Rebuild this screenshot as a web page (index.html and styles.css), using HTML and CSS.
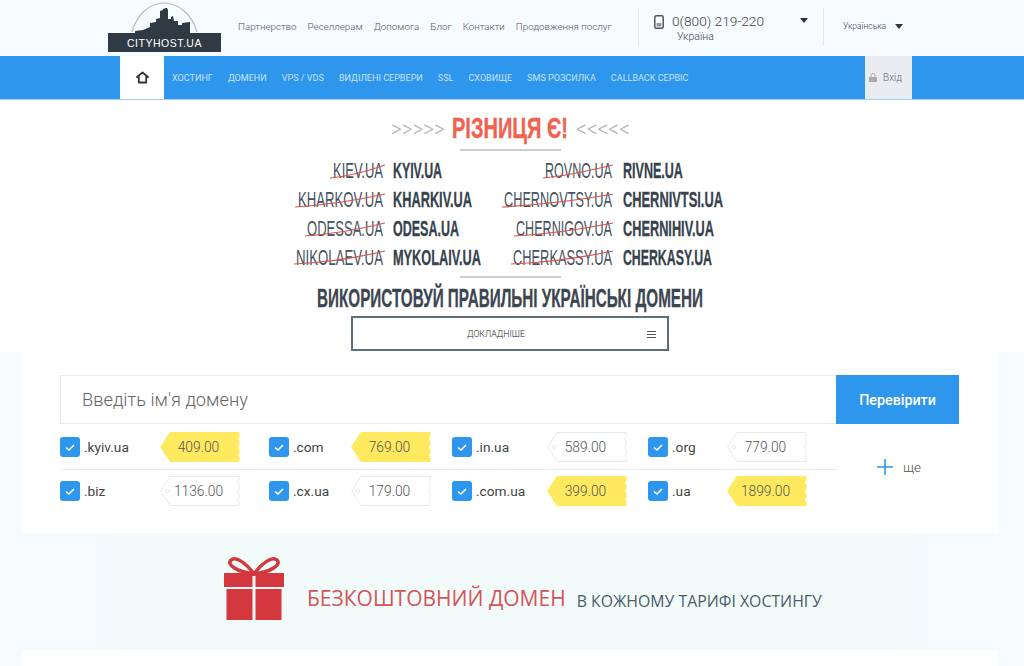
FILE: index.html
```html
<!DOCTYPE html>
<html lang="uk">

<head>
    <meta charset="UTF-8">
    <title>CITYHOST.UA</title>
    <link rel="stylesheet" href="styles.css">
</head>

<body>
    <svg class="defs" width="0" height="0">
        <symbol id="tag" viewBox="0 0 80 30">
            <path d="M10 .5H79v4l-1.500 2 1.500 2.500v4l-1.500 2 1.500 2.500v4l-1.500 2 1.500 2v4H10L.7 15z" />
            <circle cx="7" cy="15" r="1.600" class="hole" />
        </symbol>
        <symbol id="check" viewBox="0 0 20 20">
            <rect width="20" height="20" rx="3" fill="#2e96ec" />
            <path d="M6 10.500l3 2.500 5-5" fill="none" stroke="#fff" stroke-width="1.600" />
        </symbol>
    </svg>

    <header class="top">
        <a class="logo" href="#">
            <svg width="113" height="33" viewBox="0 0 113 33">
                <path d="M24 32C29 14 42 3 56 3s28 11 33 29" fill="none" stroke="#bbb" stroke-width="1.200" />
                <path d="M27 33v-2l8-1 7-3v-4l6-1v-3l4-1v-7l3-1V9l3-1h1l1 2v9h3v-2l2-1 1 5h4v4h4v-2l8-1v11z" fill="#2f3a44" />
            </svg>
            <span class="logo-name">CITYHOST.UA</span>
        </a>
        <nav class="top-links">
            <a href="#">Партнерство</a>
            <a href="#">Реселлерам</a>
            <a href="#">Допомога</a>
            <a href="#">Блог</a>
            <a href="#">Контакти</a>
            <a href="#">Продовження послуг</a>
        </nav>
        <div class="phone">
            <svg class="phone-icon" width="10" height="14" viewBox="0 0 10 14">
                <rect x=".8" y=".8" width="8.400" height="12.400" rx="1.500" fill="none" stroke="#555" stroke-width="1.500" />
                <rect x="2.500" y="8" width="5" height="3.500" fill="#999" />
            </svg>
            <div class="phone-text">
                <div class="phone-num">0(800) 219-220</div>
                <div class="phone-country">Україна</div>
            </div>
            <span class="arrow"></span>
        </div>
        <div class="lang">Українська <span class="arrow"></span></div>
    </header>

    <div class="menu">
        <a class="home" href="#">
            <svg width="13" height="13" viewBox="0 0 13 13">
                <path d="M6.500 1.500L1 6h1.800v5.500h7.400V6H12z" fill="none" stroke="#333" stroke-width="1.800" stroke-linejoin="round" />
            </svg>
        </a>
        <nav class="menu-links">
            <a href="#">Хостинг</a>
            <a href="#">Домени</a>
            <a href="#">VPS / VDS</a>
            <a href="#">Виділені сервери</a>
            <a href="#">SSL</a>
            <a href="#">Сховище</a>
            <a href="#">SMS розсилка</a>
            <a href="#">Callback сервіс</a>
        </nav>
        <a class="login" href="#">
            <svg width="8" height="9" viewBox="0 0 8 9">
                <path d="M2 4V2.500a2 2 0 0 1 4 0V4" fill="none" stroke="#aaa" />
                <rect y="4" width="8" height="5" fill="#aaa" />
            </svg>
            Вхід
        </a>
    </div>

    <section class="banner">
        <svg class="banner-art" width="1024" height="216" viewBox="0 100 1024 216">
            <g transform="scale(.87 1)">
                <text class="chev" x="449.400" y="137" textLength="62" lengthAdjust="spacingAndGlyphs">&gt;&gt;&gt;&gt;&gt;</text>
                <text class="chev" x="662.100" y="137" textLength="62" lengthAdjust="spacingAndGlyphs">&lt;&lt;&lt;&lt;&lt;</text>
            </g>
            <g transform="scale(.67 1)">
                <text class="diff" x="674.600" y="138" textLength="173" lengthAdjust="spacingAndGlyphs">РІЗНИЦЯ Є!</text>
            </g>
            <line class="rule" x1="460" y1="150" x2="561" y2="150" />

            <!-- шрифту вузького нема, тому стискаємо групою -->
            <g class="old" transform="scale(.6 1)">
                <text x="555" y="178" textLength="83.300" lengthAdjust="spacingAndGlyphs">KIEV.UA</text>
                <text x="496.700" y="207" textLength="141.700" lengthAdjust="spacingAndGlyphs">KHARKOV.UA</text>
                <text x="511.700" y="236" textLength="126.700" lengthAdjust="spacingAndGlyphs">ODESSA.UA</text>
                <text x="493.300" y="265" textLength="145" lengthAdjust="spacingAndGlyphs">NIKOLAEV.UA</text>
                <text x="908.300" y="178" textLength="111.700" lengthAdjust="spacingAndGlyphs">ROVNO.UA</text>
                <text x="840" y="207" textLength="180" lengthAdjust="spacingAndGlyphs">CHERNOVTSY.UA</text>
                <text x="860" y="236" textLength="160" lengthAdjust="spacingAndGlyphs">CHERNIGOV.UA</text>
                <text x="855" y="265" textLength="165" lengthAdjust="spacingAndGlyphs">CHERKASSY.UA</text>
            </g>
            <g class="strike">
                <path d="M330 178q24-2 55-13" />
                <path d="M295 207q45-3 90-13" />
                <path d="M305 236q40-3 80-13" />
                <path d="M294 264q45-2 91-13" />
                <path d="M543 178q24-2 70-13" />
                <path d="M502 207q55-3 111-13" />
                <path d="M514 236q50-3 99-13" />
                <path d="M511 264q50-2 102-13" />
            </g>
            <g class="new" transform="scale(.58 1)">
                <text x="677.600" y="178" textLength="84.500" lengthAdjust="spacingAndGlyphs">KYIV.UA</text>
                <text x="677.600" y="207" textLength="136.200" lengthAdjust="spacingAndGlyphs">KHARKIV.UA</text>
                <text x="677.600" y="236" textLength="113.800" lengthAdjust="spacingAndGlyphs">ODESA.UA</text>
                <text x="677.600" y="265" textLength="151.700" lengthAdjust="spacingAndGlyphs">MYKOLAIV.UA</text>
                <text x="1074.100" y="178" textLength="103.400" lengthAdjust="spacingAndGlyphs">RIVNE.UA</text>
                <text x="1074.100" y="207" textLength="172.400" lengthAdjust="spacingAndGlyphs">CHERNIVTSI.UA</text>
                <text x="1074.100" y="236" textLength="156.900" lengthAdjust="spacingAndGlyphs">CHERNIHIV.UA</text>
                <text x="1074.100" y="265" textLength="153.400" lengthAdjust="spacingAndGlyphs">CHERKASY.UA</text>
            </g>
            <line class="rule" x1="460" y1="277" x2="561" y2="277" />
            <text class="slogan" x="317" y="307" textLength="386" lengthAdjust="spacingAndGlyphs">ВИКОРИСТОВУЙ ПРАВИЛЬНІ УКРАЇНСЬКІ ДОМЕНИ</text>
        </svg>
        <a class="more" href="#">
            <span>Докладніше</span>
            <span class="burger"></span>
        </a>
    </section>

    <section class="domains">
        <form class="search">
            <input class="search-input" type="text" placeholder="Введіть ім'я домену">
            <button class="search-btn" type="button">Перевірити</button>
        </form>
        <div class="zones">
            <div class="zone-rows">
                <div class="zone-row first">
                    <label class="zone"><svg width="20" height="20"><use href="#check" /></svg>.kyiv.ua</label>
                    <div class="price hot"><svg><use href="#tag" /></svg><span>409.00</span></div>
                    <label class="zone"><svg width="20" height="20"><use href="#check" /></svg>.com</label>
                    <div class="price hot"><svg><use href="#tag" /></svg><span>769.00</span></div>
                    <label class="zone"><svg width="20" height="20"><use href="#check" /></svg>.in.ua</label>
                    <div class="price"><svg><use href="#tag" /></svg><span>589.00</span></div>
                    <label class="zone"><svg width="20" height="20"><use href="#check" /></svg>.org</label>
                    <div class="price"><svg><use href="#tag" /></svg><span>779.00</span></div>
                </div>
                <div class="zone-row">
                    <label class="zone"><svg width="20" height="20"><use href="#check" /></svg>.biz</label>
                    <div class="price"><svg><use href="#tag" /></svg><span>1136.00</span></div>
                    <label class="zone"><svg width="20" height="20"><use href="#check" /></svg>.cx.ua</label>
                    <div class="price"><svg><use href="#tag" /></svg><span>179.00</span></div>
                    <label class="zone"><svg width="20" height="20"><use href="#check" /></svg>.com.ua</label>
                    <div class="price hot"><svg><use href="#tag" /></svg><span>399.00</span></div>
                    <label class="zone"><svg width="20" height="20"><use href="#check" /></svg>.ua</label>
                    <div class="price hot"><svg><use href="#tag" /></svg><span>1899.00</span></div>
                </div>
            </div>
            <a class="show-more" href="#">
                <svg width="16" height="16" viewBox="0 0 16 16">
                    <path d="M8 0v16M0 8h16" stroke="#2e96ec" stroke-width="1.600" />
                </svg>
                ще
            </a>
        </div>
    </section>

    <section class="promo">
        <svg class="gift" width="60" height="64" viewBox="0 0 60 64">
            <path d="M30 17C22 6 12-1 7 3 2 8 14 15 30 17zM30 17C38 6 48-1 53 3 58 8 46 15 30 17z" fill="none" stroke="#d4373d" stroke-width="3.500" />
            <rect y="16" width="28.500" height="14" fill="#d4373d" />
            <rect x="31.500" y="16" width="28.500" height="14" fill="#d4373d" />
            <rect x="2.500" y="32" width="26" height="31" fill="#d4373d" />
            <rect x="31.500" y="32" width="26" height="31" fill="#d4373d" />
        </svg>
        <span class="promo-main">БЕЗКОШТОВНИЙ ДОМЕН</span>
        <span class="promo-sub">В КОЖНОМУ ТАРИФІ ХОСТИНГУ</span>
    </section>

    <div class="next-card"></div>
</body>

</html>
```

FILE: styles.css
```css
* {
    margin: 0;
    padding: 0;
    box-sizing: border-box;
}

body {
    background-color: #f5fbff;
    font-family: Roboto, "Liberation Sans", sans-serif;
    color: #444;
}

a {
    text-decoration: none;
    color: inherit;
}

.defs {
    display: block;
}

/* шапка */
.top {
    height: 56px;
    padding-left: 108px;
    display: flex;
    align-items: flex-start;
}

.logo {
    width: 113px;
    height: 53px;
    display: block;
}

.logo svg {
    display: block;
}

.logo-name {
    display: block;
    height: 19px;
    line-height: 20px;
    text-align: center;
    background-color: #2f3a44;
    color: #fff;
    font-family: "Liberation Sans", sans-serif;
    font-size: 10.500px;
    letter-spacing: .5px;
}

.top-links {
    display: flex;
    gap: 11px;
    margin-left: 17px;
    width: 400px;
    padding-top: 21px;
    font-size: 9.800px;
    font-weight: 300;
    color: #555;
}

.phone {
    width: 186px;
    height: 38px;
    margin-top: 8px;
    padding-left: 15px;
    display: flex;
    align-items: flex-start;
    border-left: 1px solid #e3e8ec;
    border-right: 1px solid #e3e8ec;
}

.phone-icon {
    margin-top: 7px;
}

.phone-text {
    margin-left: 8px;
    width: 128px;
    padding-top: 4px;
}

.phone-num {
    font-size: 13.700px;
    font-weight: 300;
    line-height: 18px;
}

.phone-country {
    padding-left: 5px;
    margin-top: 1px;
    font-size: 10.500px;
    font-weight: 300;
    line-height: 12px;
}

.arrow {
    display: inline-block;
    width: 0;
    height: 0;
    border: 4px solid transparent;
    border-top: 5px solid #333;
    border-bottom: 0;
}

.phone .arrow {
    margin-top: 10px;
}

.lang {
    margin-left: 19px;
    padding-top: 21px;
    font-size: 8.500px;
    font-weight: 300;
    display: flex;
    align-items: center;
    gap: 9px;
    line-height: 10px;
}

/* синє меню */
.menu {
    height: 44px;
    padding: 0 112px 0 120px;
    display: flex;
    background-color: #2e96ec;
    border-bottom: 1px solid #9fd0f5;
}

.home {
    width: 44px;
    background-color: #fff;
    display: flex;
    align-items: center;
    justify-content: center;
}

.menu-links {
    flex: 1;
    display: flex;
    align-items: center;
    gap: 15px;
    padding-left: 8px;
    font-size: 9.050px;
    text-transform: uppercase;
    color: #c9e4fa;
}

.login {
    width: 47px;
    padding-left: 4px;
    background-color: #e9edf1;
    display: flex;
    align-items: center;
    gap: 6px;
    font-size: 10px;
    font-weight: 300;
    color: #666;
}

/* банер */
.banner {
    height: 252px;
    background-color: #fff;
    display: flex;
    flex-direction: column;
    align-items: center;
}

.banner-art {
    display: block;
    flex: none;
    font-family: "Liberation Sans", sans-serif;
}

.chev {
    font-family: Roboto, sans-serif;
    font-weight: 300;
    font-size: 24px;
    fill: #b5b5b5;
}

.diff {
    font-size: 30px;
    font-weight: 700;
    fill: #f0624f;
    stroke: #f0624f;
    stroke-width: .4;
}

.rule {
    stroke: #bdbdbd;
    stroke-width: 1.500;
}

.old text {
    font-weight: 400;
    font-size: 22px;
    fill: #46525d;
}

.new text {
    font-size: 22px;
    font-weight: 700;
    fill: #36424d;
    stroke: #36424d;
    stroke-width: .3;
}

.strike path {
    fill: none;
    stroke: #d9534f;
    stroke-width: 1.200;
}

.slogan {
    font-size: 25px;
    font-weight: 700;
    fill: #3c4650;
    stroke: #3c4650;
    stroke-width: .3;
}

.more {
    width: 318px;
    height: 35px;
    margin-left: -4px;
    padding-right: 28px;
    border: 2px solid #5d6d7b;
    display: flex;
    align-items: center;
    justify-content: center;
    position: relative;
    font-size: 8.800px;
    font-weight: 300;
    text-transform: uppercase;
    color: #222;
}

.burger {
    position: absolute;
    right: 11px;
    top: 13px;
    width: 9px;
    height: 7px;
    border-top: 1px solid #4d5b67;
    border-bottom: 1px solid #4d5b67;
    background: linear-gradient(#4d5b67, #4d5b67) center / 100% 1px no-repeat;
}

/* домени */
.domains {
    height: 181px;
    margin: 0 26px 0 22px;
    padding: 23px 39px 0 38px;
    background-color: #fff;
}

.search {
    display: flex;
    height: 49px;
}

.search-input {
    flex: 1;
    min-width: 0;
    border: 1px solid #e6ebef;
    border-right: 0;
    padding-left: 21px;
    font-family: inherit;
    font-size: 18.300px;
    font-weight: 300;
    outline: none;
}

.search-input::placeholder {
    color: #666;
}

.search-btn {
    width: 123px;
    border: 0;
    background-color: #2e96ec;
    color: #fff;
    font-family: inherit;
    font-size: 14.300px;
    font-weight: 500;
}

.zones {
    display: flex;
}

.zone-rows {
    width: 778px;
}

.zone-row {
    display: grid;
    grid-template-columns: 100px 109px 82px 101px 95px 101px 79px 111px;
    align-items: center;
    height: 42px;
}

.zone-row.first {
    height: 46px;
    border-bottom: 1px solid #e8edf2;
}

.zone {
    display: flex;
    align-items: center;
    gap: 4px;
    font-size: 13.700px;
    font-weight: 400;
    color: #444;
}

.price {
    position: relative;
    width: 80px;
    height: 30px;
    line-height: 30px;
    text-align: center;
    font-size: 13.800px;
    font-weight: 300;
    color: #555;
}

.price svg {
    position: absolute;
    left: 0;
    top: 0;
    width: 80px;
    height: 30px;
    fill: #fff;
    stroke: #e4ebf0;
}

.price .hole {
    fill: #e8eef2;
    stroke: none;
}

.price span {
    position: relative;
    left: -1.500px;
}

.price.hot svg {
    fill: #ffe95f;
    stroke: #ffe95f;
}

.price.hot .hole {
    fill: #fff;
}

.show-more {
    margin-left: 39px;
    margin-top: 35px;
    height: 16px;
    display: flex;
    align-items: center;
    gap: 10px;
    font-size: 13.500px;
    font-weight: 300;
    color: #555;
}

/* подарунок */
.promo {
    height: 117px;
    padding: 24px 0 0 224px;
    background: linear-gradient(90deg, #f5fbff 90px, #f2fbf9 130px, #f2fbf9 890px, #f5fbff 930px);
    display: flex;
    align-items: flex-start;
    font-family: "Open Sans", sans-serif;
}

.gift {
    display: block;
}

.promo-main {
    margin: 28px 0 0 23px;
    font-size: 21px;
    line-height: 27px;
    color: #d4545a;
}

.promo-sub {
    margin: 33px 0 0 11px;
    font-size: 15.850px;
    line-height: 22px;
    color: #4a5c6d;
}

.next-card {
    height: 16px;
    margin: 0 26px 0 22px;
    background-color: #fff;
}
```
